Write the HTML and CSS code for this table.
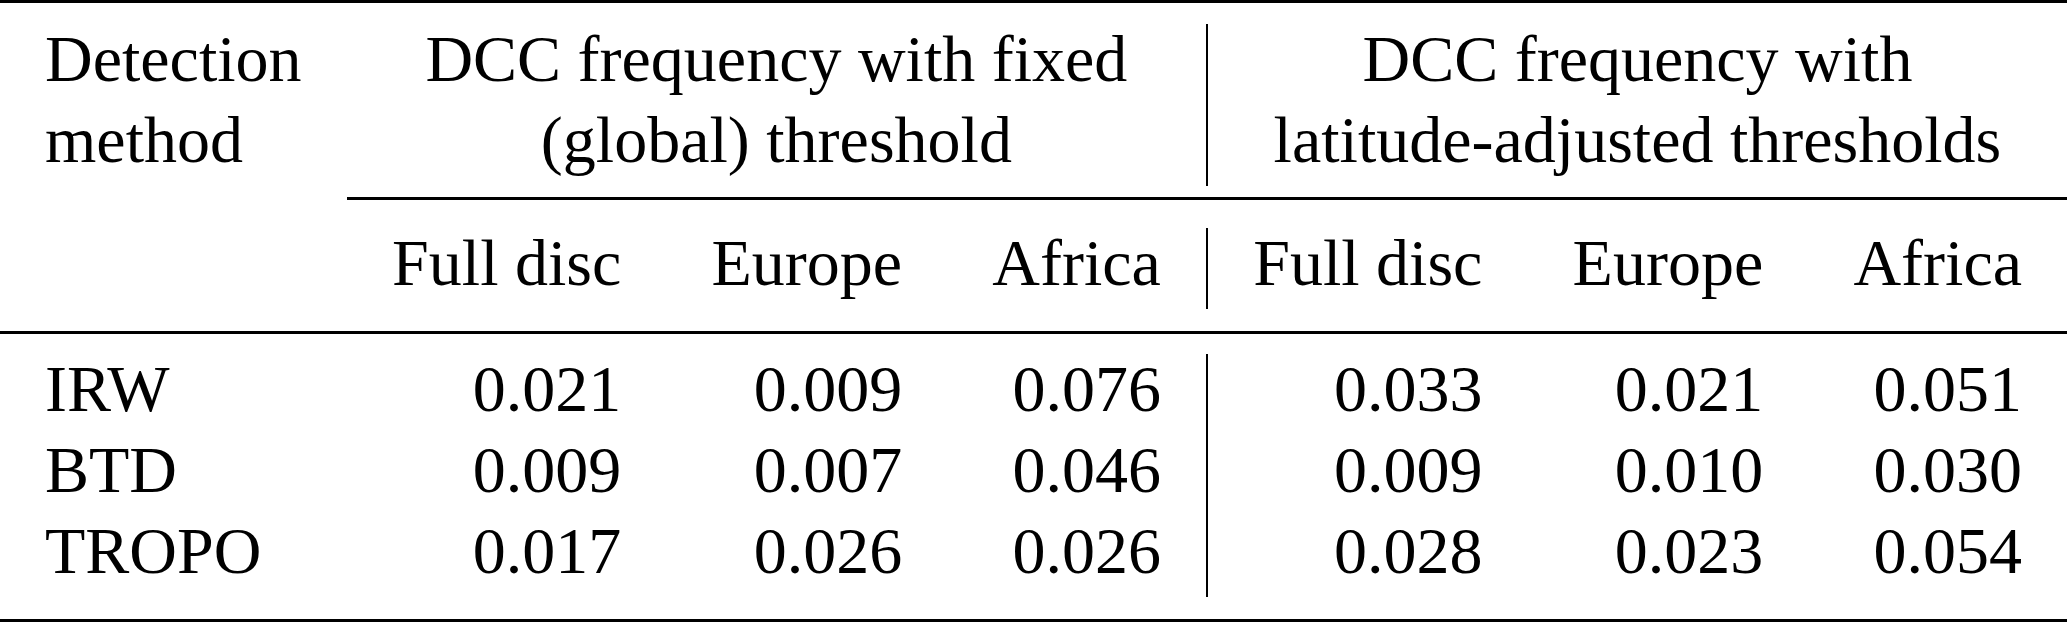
FILE: index.html
```html
<!DOCTYPE html>
<html lang="en">

<head>
    <meta charset="UTF-8">
    <meta name="viewport" content="width=device-width, initial-scale=1.0">
    <title>DCC frequency</title>
    <link rel="stylesheet" href="styles.css">
</head>

<body>

    <table class="results">
        <tr class="rule-row">
            <td colspan="7"><div class="rule rule-top"></div></td>
        </tr>
        <tr>
            <td class="label"><span class="txt">Detection<br>method</span></td>
            <td class="group" colspan="3"><span class="txt">DCC frequency with fixed<br>(global) threshold</span></td>
            <td class="group split" colspan="3"><span class="txt">DCC frequency with<br>latitude-adjusted thresholds</span></td>
        </tr>
        <tr class="rule-row">
            <td></td>
            <td colspan="6"><div class="rule rule-cmid"></div></td>
        </tr>
        <tr>
            <td></td>
            <td class="num"><span class="txt">Full disc</span></td>
            <td class="num"><span class="txt">Europe</span></td>
            <td class="num"><span class="txt">Africa</span></td>
            <td class="num split"><span class="txt">Full disc</span></td>
            <td class="num"><span class="txt">Europe</span></td>
            <td class="num"><span class="txt">Africa</span></td>
        </tr>
        <tr class="rule-row">
            <td colspan="7"><div class="rule rule-mid"></div></td>
        </tr>
        <tr>
            <td class="label"><span class="txt">IRW</span></td>
            <td class="num"><span class="txt">0.021</span></td>
            <td class="num"><span class="txt">0.009</span></td>
            <td class="num"><span class="txt">0.076</span></td>
            <td class="num split"><span class="txt">0.033</span></td>
            <td class="num"><span class="txt">0.021</span></td>
            <td class="num"><span class="txt">0.051</span></td>
        </tr>
        <tr>
            <td class="label"><span class="txt">BTD</span></td>
            <td class="num"><span class="txt">0.009</span></td>
            <td class="num"><span class="txt">0.007</span></td>
            <td class="num"><span class="txt">0.046</span></td>
            <td class="num split"><span class="txt">0.009</span></td>
            <td class="num"><span class="txt">0.010</span></td>
            <td class="num"><span class="txt">0.030</span></td>
        </tr>
        <tr>
            <td class="label"><span class="txt">TROPO</span></td>
            <td class="num"><span class="txt">0.017</span></td>
            <td class="num"><span class="txt">0.026</span></td>
            <td class="num"><span class="txt">0.026</span></td>
            <td class="num split"><span class="txt">0.028</span></td>
            <td class="num"><span class="txt">0.023</span></td>
            <td class="num"><span class="txt">0.054</span></td>
        </tr>
        <tr class="rule-row">
            <td colspan="7"><div class="rule rule-bottom"></div></td>
        </tr>
    </table>

</body>

</html>
```

FILE: styles.css
```css
body {
    margin: 0;
    background-color: #fff;
    color: #000;
    font-family: "Liberation Serif", "Times New Roman", serif;
}

.results {
    width: 100%;
    border-collapse: separate;
    border-spacing: 0;
    font-size: 66px;
    line-height: 81px;
}

.results td {
    padding: 0 45px 6px;
    vertical-align: top;
    white-space: nowrap;
}

/* lift the baseline a little, like a LaTeX strut */
.txt {
    display: block;
    margin-top: -6px;
}

.label {
    text-align: left;
}

.group {
    text-align: center;
}

.num {
    text-align: right;
}

.split {
    border-left: 2px solid #000;
}

.results .rule-row td {
    padding: 0;
    font-size: 0;
    line-height: 0;
}

.rule {
    border-top: 3px solid #000;
}

.rule-top {
    margin-bottom: 21px;
}

.rule-cmid {
    margin: 11px 0 28px;
}

.rule-mid {
    margin: 22px 0 20px;
}

.rule-bottom {
    margin-top: 22px;
}
```
